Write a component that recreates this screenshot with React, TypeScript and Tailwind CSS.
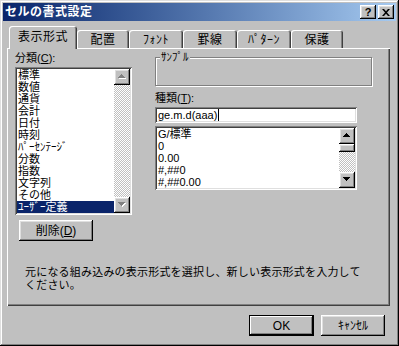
import React from "react";

const jp = "font-['Liberation_Sans','Noto_Sans_CJK_JP',sans-serif]";
const raised =
  "shadow-[inset_-1px_-1px_#000,inset_1px_1px_#fff,inset_-2px_-2px_#808080,inset_2px_2px_#dfdfdf]";
const sunken =
  "shadow-[inset_1px_1px_#808080,inset_-1px_-1px_#fff,inset_2px_2px_#404040,inset_-2px_-2px_#dfdfdf]";
const dither =
  "bg-[repeating-conic-gradient(#fff_0_25%,#c0c0c0_0_50%)] bg-[length:2px_2px]";

const UP = "M3 0h1v1h1v1h1v1h1v1H0V3h1V2h1V1h1Z";
const DOWN = "M0 0h7v1h-1v1h-1v1h-1v1h-1v-1h-1v-1h-1v-1h-1Z";

function Arrow({ dir, disabled }: { dir: "up" | "down"; disabled?: boolean }) {
  const d = dir === "up" ? UP : DOWN;
  return (
    <div className={`flex h-[16px] w-[16px] shrink-0 items-center justify-center bg-[#c0c0c0] ${raised}`}>
      <svg width="8" height="5" viewBox="0 0 8 5" className="mt-[-1px]">
        {disabled && <path d={d} fill="#fff" transform="translate(1 1)" />}
        <path d={d} fill={disabled ? "#808080" : "#000"} />
      </svg>
    </div>
  );
}

function ScrollBar({ disabled }: { disabled?: boolean }) {
  return (
    <div className="flex w-[16px] flex-col">
      <Arrow dir="up" disabled={disabled} />
      <div className={`flex-1 ${dither}`}>
        {!disabled && <div className={`h-[8px] w-[16px] bg-[#c0c0c0] ${raised}`} />}
      </div>
      <Arrow dir="down" disabled={disabled} />
    </div>
  );
}

function Button({ children, def, className = "" }: { children: React.ReactNode; def?: boolean; className?: string }) {
  return (
    <div
      className={`flex h-[21px] items-center justify-center bg-[#c0c0c0] text-[12px] leading-none text-black ${
        def
          ? "shadow-[inset_0_0_0_1px_#000,inset_-2px_-2px_#000,inset_2px_2px_#fff,inset_-3px_-3px_#808080]"
          : raised
      } ${className}`}
    >
      {children}
    </div>
  );
}

const tabs = [
  { label: "表示形式", w: 68 },
  { label: "配置", w: 52 },
  { label: "ﾌｫﾝﾄ", w: 54 },
  { label: "罫線", w: 54 },
  { label: "ﾊﾟﾀｰﾝ", w: 54 },
  { label: "保護", w: 52 },
];

const categories = [
  "標準",
  "数値",
  "通貨",
  "会計",
  "日付",
  "時刻",
  "ﾊﾟｰｾﾝﾃｰｼﾞ",
  "分数",
  "指数",
  "文字列",
  "その他",
  "ﾕｰｻﾞｰ定義",
];

const formats = ["G/標準", "0", "0.00", "#,##0", "#,##0.00"];

export default function App() {
  return (
    <div
      className={`flex h-[346px] w-[399px] flex-col bg-[#c0c0c0] p-[3px] text-black ${jp} shadow-[inset_-1px_-1px_#000,inset_1px_1px_#dfdfdf,inset_-2px_-2px_#808080,inset_2px_2px_#fff]`}
    >
      {/* Title bar */}
      <div className="flex h-[18px] items-center bg-gradient-to-r from-[#0a246a] to-[#a6caf0] pl-[2px] pr-[2px]">
        <span className="text-[12px] font-bold leading-none tracking-[0.5px] text-white">セルの書式設定</span>
        <div className="ml-auto flex gap-[2px]">
          <div className={`flex h-[14px] w-[16px] items-center justify-center bg-[#c0c0c0] ${raised}`}>
            <span className="text-[11px] font-bold leading-none">?</span>
          </div>
          <div className={`flex h-[14px] w-[16px] items-center justify-center bg-[#c0c0c0] ${raised}`}>
            <svg width="8" height="7" viewBox="0 0 8 7">
              <path d="M0 0h2l2 2.3L6 0h2L5 3.5 8 7H6L4 4.7 2 7H0l3-3.5Z" fill="#000" />
            </svg>
          </div>
        </div>
      </div>

      <div className="flex flex-col px-[4px]">
        {/* Tabs */}
        <div className="mt-[5px] flex h-[22px] items-end pl-[2px]">
          {tabs.map((t, i) => (
            <div
              key={t.label}
              style={{ width: t.w }}
              className={`flex items-center justify-center rounded-t-[3px] bg-[#c0c0c0] text-[12px] leading-none tracking-[0.5px] shadow-[inset_1px_1px_#fff,inset_-1px_0_#404040,inset_-2px_0_#808080] ${
                i === 0 ? "relative z-10 mb-[-1px] h-[23px] pb-[1px]" : "h-[18px] pt-[1px]"
              }`}
            >
              {t.label}
            </div>
          ))}
        </div>

        {/* Panel */}
        <div className="flex h-[258px] w-[383px] flex-col pl-[8px] pt-[4px] shadow-[inset_1px_1px_#fff,inset_-1px_-1px_#404040,inset_-2px_-2px_#808080]">
          <div className="flex">
            {/* Left column */}
            <div className="flex w-[117px] flex-col">
              <div className="h-[12px] text-[11px] leading-[12px]">
                分類(<span className="underline">C</span>):
              </div>
              <div className={`mt-[3px] flex h-[148px] bg-white p-[2px] ${sunken}`}>
                <div className="flex flex-1 flex-col">
                  {categories.map((c, i) => (
                    <div
                      key={c}
                      className={`h-[12px] pl-[1px] text-[11px] leading-[12px] ${
                        i === categories.length - 1 ? "bg-[#0a246a] text-white" : ""
                      }`}
                    >
                      {c}
                    </div>
                  ))}
                </div>
                <ScrollBar disabled />
              </div>
              <Button className="ml-[4px] mt-[5px] w-[74px]">
                削除(<span className="underline">D</span>)
              </Button>
            </div>

            {/* Right column */}
            <div className="ml-[23px] flex w-[217px] flex-col">
              <div className="relative mt-[5px] h-[29px] border border-[#808080] shadow-[inset_1px_1px_#fff,1px_1px_#fff]">
                <span className="absolute left-[4px] top-[-7px] bg-[#c0c0c0] px-[1px] text-[11px] leading-[12px]">
                  ｻﾝﾌﾟﾙ
                </span>
              </div>
              <div className="mt-[6px] h-[12px] text-[11px] leading-[12px]">
                種類(<span className="underline">T</span>):
              </div>
              <div className={`mt-[3px] flex h-[16px] w-[202px] items-center bg-white px-[3px] ${sunken}`}>
                <span className="text-[11px] leading-none">ge.m.d(aaa)</span>
                <span className="ml-[1px] h-[12px] w-[1px] bg-black" />
              </div>
              <div className={`mt-[3px] flex h-[64px] w-[202px] bg-white p-[2px] ${sunken}`}>
                <div className="flex flex-1 flex-col">
                  {formats.map((f) => (
                    <div key={f} className="h-[12px] pl-[1px] text-[11px] leading-[12px]">
                      {f}
                    </div>
                  ))}
                </div>
                <ScrollBar />
              </div>
            </div>
          </div>

          <p className="ml-[10px] mt-[25px] text-[11px] leading-[13px] tracking-[0.2px]">
            元になる組み込みの表示形式を選択し、新しい表示形式を入力して
            <br />
            ください。
          </p>
        </div>

        {/* Bottom buttons */}
        <div className="mt-[9px] flex justify-end gap-[7px] pr-[7px]">
          <Button def className="w-[65px]">
            OK
          </Button>
          <Button className="w-[64px]">ｷｬﾝｾﾙ</Button>
        </div>
      </div>
    </div>
  );
}
